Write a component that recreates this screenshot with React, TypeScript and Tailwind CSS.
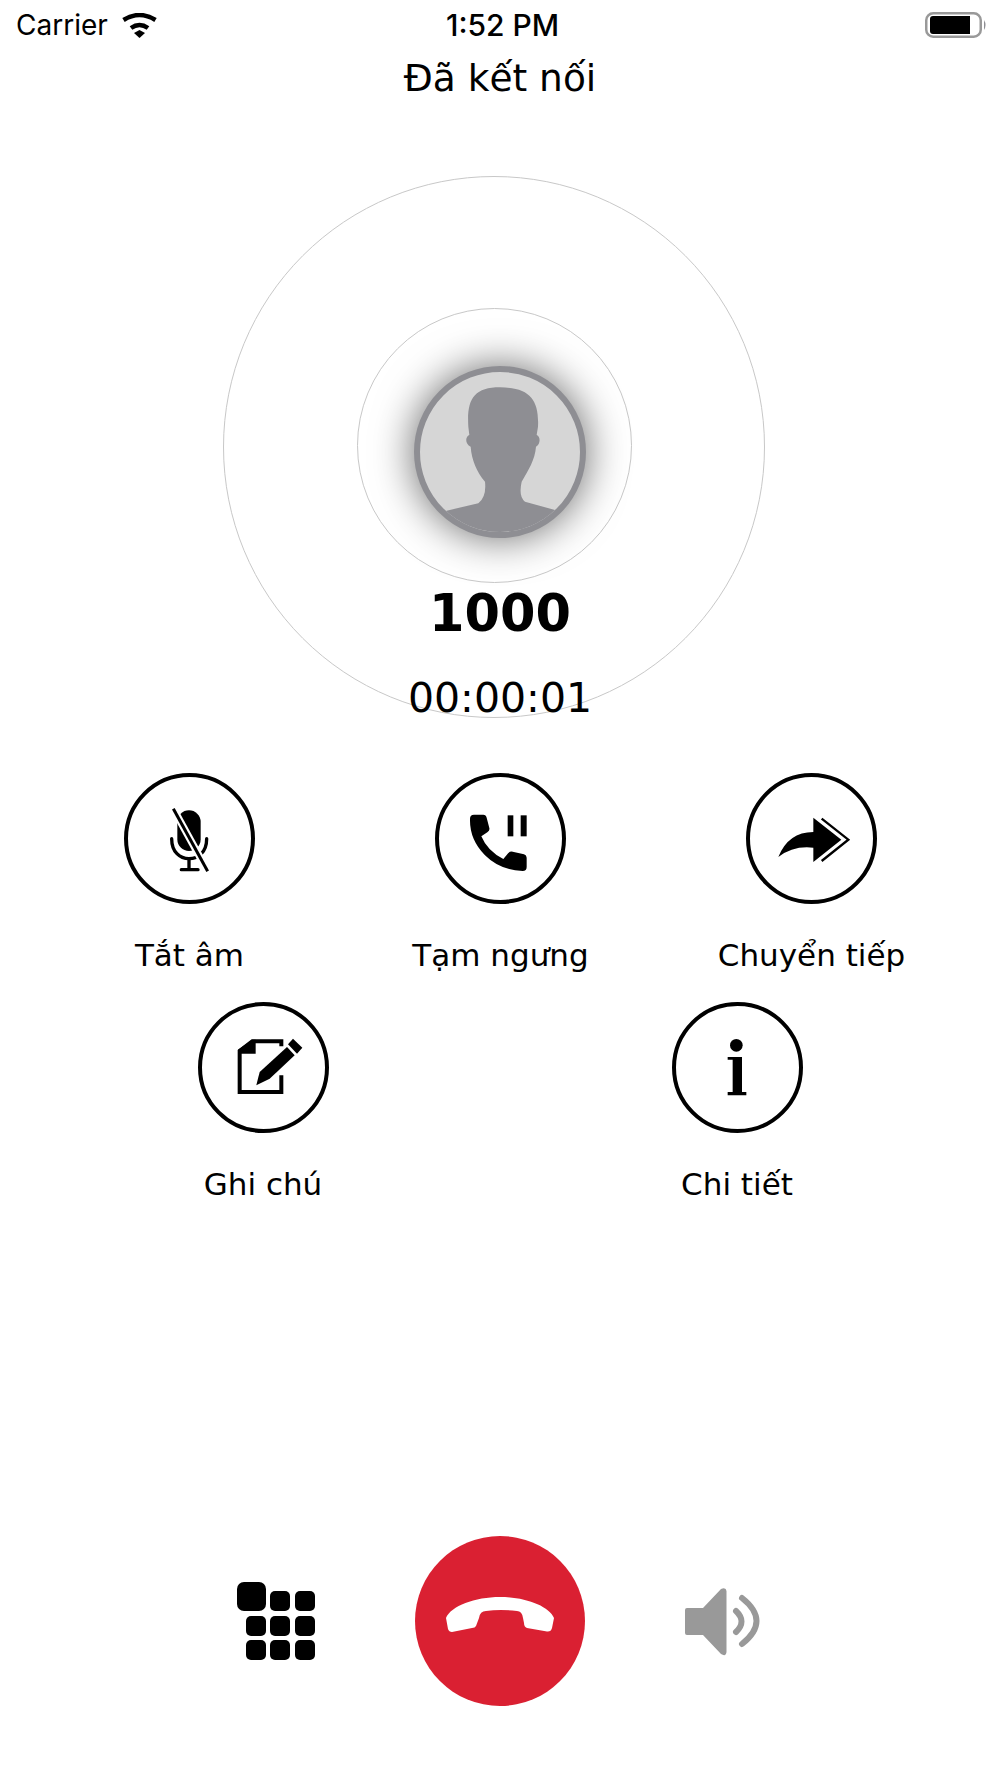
import React from 'react';

const ACTION_LABEL = "text-[31px] leading-[40px] text-black font-['DejaVu_Sans',sans-serif] whitespace-nowrap";

const ActionButton: React.FC<{ label: string; viewBox: string; children: React.ReactNode }> = ({ label, viewBox, children }) => (
  <div className="flex flex-col items-center">
    <div className="w-[131px] h-[131px] rounded-full border-4 border-black bg-white flex items-center justify-center">
      <svg width="125" height="125" viewBox={viewBox} className="shrink-0">{children}</svg>
    </div>
    <div className={`mt-[31px] ${ACTION_LABEL}`}>{label}</div>
  </div>
);

const StatusBar = () => (
  <div className="h-[50px] flex items-center justify-between pl-4 pr-[13px] relative font-['Inter',sans-serif] text-black">
    <div className="flex items-center gap-[14px]">
      <span className="text-[28px] leading-none">Carrier</span>
      <svg width="35" height="25" viewBox="0 0 35 25">
        <path d="M1.5 7 Q17.5 -3 33.5 7" fill="none" stroke="#000" strokeWidth="4.5" />
        <path d="M9 15 Q17.5 9 26 15" fill="none" stroke="#000" strokeWidth="4.5" />
        <path d="M12 20 L17.5 17 L23 20 L17.5 25 Z" fill="#000" />
      </svg>
    </div>
    <span className="absolute left-[446px] top-[10px] text-[30px] leading-[30px] font-medium">1:52 PM</span>
    <svg width="62" height="26" viewBox="0 0 62 26">
      <rect x="1.25" y="1.25" width="54.5" height="23.5" rx="7" fill="none" stroke="#999" strokeWidth="2.5" />
      <path d="M8 4 H45 V22 H8 Q5 22 5 19 V7 Q5 4 8 4 Z" fill="#000" />
      <path d="M59 8 Q62 13 59 18 Z" fill="#8e8e93" />
    </svg>
  </div>
);

const Avatar = () => (
  <div className="w-[172px] h-[172px] rounded-full border-[6px] border-[#8e8e93] bg-[#d6d6d6] overflow-hidden shadow-[0_0_42px_rgba(0,0,0,0.6)]">
    <svg width="160" height="160" viewBox="240 216 480 480">
      <path
        d="M385 380 C380 300 400 262 480 262 C570 262 598 300 594 380 L590 405 C602 410 602 432 588 440 C585 480 565 510 545 545 Q535 590 555 605 L645 630 L760 720 H200 L320 632 L415 610 Q440 590 435 545 C410 515 395 480 392 440 C375 432 375 410 388 405 Z"
        fill="#8e8e93"
      />
    </svg>
  </div>
);

export default function App() {
  return (
    <div className="w-[1000px] h-[1778px] bg-white overflow-hidden font-['DejaVu_Sans',sans-serif]">
      <StatusBar />
      <div className="h-[126px] pt-[6px] text-center text-[37.5px] leading-[44px] text-black">Đã kết nối</div>

      <div className="relative h-[597px] flex flex-col items-center">
        <div className="absolute left-[223px] top-0 w-[542px] h-[542px] rounded-full border border-[#c8c8c8]" />
        <div className="absolute left-[357px] top-[132px] w-[275px] h-[275px] rounded-full border border-[#c8c8c8]" />
        <div className="relative mt-[190px]">
          <Avatar />
        </div>
        <div className="relative mt-[46px] text-[51px] leading-[60px] font-bold text-black">1000</div>
        <div className="relative mt-[31px] text-[41px] leading-[46px] text-black">00:00:01</div>
      </div>

      <div className="grid grid-cols-[311px_311px_311px] pl-[34px]">
        <ActionButton label="Tắt âm" viewBox="81 47 375 375">
          <rect x="232" y="150" width="70" height="122" rx="35" fill="#000" />
          <path d="M215 235 C215 275 240 295 267 295 C295 295 320 275 320 235" fill="none" stroke="#000" strokeWidth="10" strokeLinecap="round" />
          <path d="M267 295 V328 M244 328 H294" fill="none" stroke="#000" strokeWidth="10" strokeLinecap="round" />
          <path d="M220 145 L323 333" stroke="#fff" strokeWidth="22" />
          <path d="M220 145 L323 333" stroke="#000" strokeWidth="9" />
        </ActionButton>
        <ActionButton label="Tạm ngưng" viewBox="114 47 375 375">
          <path
            d="M222 163 L250 163 Q258 163 260 172 L268 203 Q270 210 262 216 L244 228 Q262 272 310 296 L325 278 Q330 273 338 274 L372 282 Q380 285 380 292 L380 320 Q380 332 368 332 Q300 330 255 285 Q208 238 210 175 Q210 163 222 163 Z"
            fill="#000"
          />
          <rect x="323" y="165" width="17" height="63" fill="#000" />
          <rect x="362" y="165" width="18" height="63" fill="#000" />
        </ActionButton>
        <ActionButton label="Chuyển tiếp" viewBox="147 47 375 375">
          <path d="M340 172 L424 238 L340 305 L340 262 Q280 255 235 290 Q265 215 340 215 Z" fill="#000" />
          <path d="M365 175 L445 238 L365 302" fill="none" stroke="#000" strokeWidth="7" />
        </ActionButton>
      </div>

      <div className="flex justify-center mt-[27px]">
        <div className="w-[474px] flex justify-center">
          <ActionButton label="Ghi chú" viewBox="64 44 375 375">
            <path d="M305 255 V305 H180 V182 L218 153 H305 V168" fill="none" stroke="#000" strokeWidth="12" />
            <path d="M175 178 L218 148 H228 V190 H180 Z" fill="#000" />
            <path d="M230 285 L240 245 L322 170 L345 195 L270 265 Z" fill="#000" />
            <path d="M340 145 L368 172 L352 190 L325 162 Z" fill="#000" />
          </ActionButton>
        </div>
        <div className="w-[474px] flex justify-center">
          <ActionButton label="Chi tiết" viewBox="74 44 375 375">
            <circle cx="258" cy="165" r="19" fill="#000" />
            <path d="M232 200 H275 V305 H288 V315 H232 V305 H247 V208 H232 Z" fill="#000" />
          </ActionButton>
        </div>
      </div>

      <div className="flex items-center justify-center gap-[100px] mt-[332px] pr-[1px]">
        <svg width="78" height="78" viewBox="0 0 78 78">
          <rect x="0" y="0" width="29" height="29" rx="7" fill="#000" />
          <rect x="33" y="9" width="20" height="20" rx="5" fill="#000" />
          <rect x="58" y="9" width="20" height="20" rx="5" fill="#000" />
          <rect x="9" y="34" width="20" height="20" rx="5" fill="#000" />
          <rect x="33" y="34" width="20" height="20" rx="5" fill="#000" />
          <rect x="58" y="34" width="20" height="20" rx="5" fill="#000" />
          <rect x="9" y="58" width="20" height="20" rx="5" fill="#000" />
          <rect x="33" y="58" width="20" height="20" rx="5" fill="#000" />
          <rect x="58" y="58" width="20" height="20" rx="5" fill="#000" />
        </svg>
        <div className="w-[170px] h-[170px] rounded-full bg-[#da2032] flex items-center justify-center">
          <svg width="170" height="170" viewBox="0 0 170 170">
            <path
              d="M31 82 C36 70 60 61 85 61 C110 61 134 70 139 82 L137 92 Q136 96 132 95.5 L112 92 Q109 91 109 87 L108 82 Q107 75 102 75 Q85 73 71 75 Q65 75 64 82 L61 90 Q60 92 57 92 L37 96 Q34 96 33 93 Z"
              fill="#fff"
            />
          </svg>
        </div>
        <svg width="77" height="67" viewBox="0 0 77 67" className="overflow-visible">
          <path d="M2 20 H18 L36 1 Q41 -1 41.5 3 V64 Q41 69 36 66 L18 47 H2 Q0 47 0 45 V22 Q0 20 2 20 Z" fill="#999" />
          <path d="M51 23 Q62 33.5 51 44" fill="none" stroke="#999" strokeWidth="6" strokeLinecap="round" />
          <path d="M57 10 Q86 33 57 56" fill="none" stroke="#999" strokeWidth="6" strokeLinecap="round" />
        </svg>
      </div>
    </div>
  );
}
